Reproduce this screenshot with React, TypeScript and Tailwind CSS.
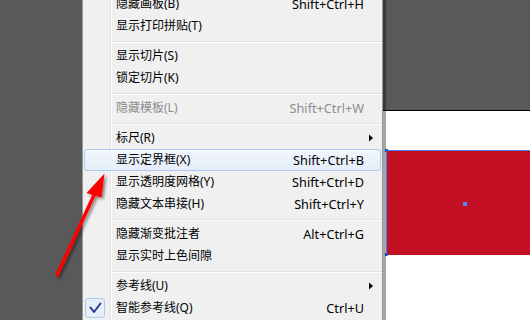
import React from "react";

type Row =
  | { kind: "sep" }
  | {
      kind: "item";
      label: string;
      shortcut?: string;
      sub?: boolean;
      disabled?: boolean;
      hl?: boolean;
      checked?: boolean;
    };

const rows: Row[] = [
  { kind: "item", label: "隐藏画板(B)", shortcut: "Shift+Ctrl+H" },
  { kind: "item", label: "显示打印拼贴(T)" },
  { kind: "sep" },
  { kind: "item", label: "显示切片(S)" },
  { kind: "item", label: "锁定切片(K)" },
  { kind: "sep" },
  { kind: "item", label: "隐藏模板(L)", shortcut: "Shift+Ctrl+W", disabled: true },
  { kind: "sep" },
  { kind: "item", label: "标尺(R)", sub: true },
  { kind: "item", label: "显示定界框(X)", shortcut: "Shift+Ctrl+B", hl: true },
  { kind: "item", label: "显示透明度网格(Y)", shortcut: "Shift+Ctrl+D" },
  { kind: "item", label: "隐藏文本串接(H)", shortcut: "Shift+Ctrl+Y" },
  { kind: "sep" },
  { kind: "item", label: "隐藏渐变批注者", shortcut: "Alt+Ctrl+G" },
  { kind: "item", label: "显示实时上色间隙" },
  { kind: "sep" },
  { kind: "item", label: "参考线(U)", sub: true },
  { kind: "item", label: "智能参考线(Q)", shortcut: "Ctrl+U", checked: true },
];

function MenuRow({ row }: { row: Row }) {
  if (row.kind === "sep") {
    return (
      <div className="h-[8px] pt-[4px] ml-[29px]">
        <div className="h-px bg-[#e0e0e0]" />
        <div className="h-px bg-white" />
      </div>
    );
  }
  return (
    <div
      className={
        "mx-[1px] h-[22px] flex items-center rounded-[3px] border " +
        (row.hl
          ? "border-[#a9cdf2] bg-[linear-gradient(to_bottom,#f2f7fd,#e4edf9)]"
          : "border-transparent")
      }
    >
      <div className="w-[20px] h-[20px] shrink-0">
        {row.checked && (
          <div className="w-[20px] h-[20px] rounded-[3px] border border-[#a9cdf2] bg-[#e6eefa] flex items-center justify-center">
            <svg width="18" height="18" viewBox="0 0 18 18">
              <path d="M4.5 8.5 L8 13 L14.5 4.5" fill="none" stroke="#1d2f8c" strokeWidth="1.8" strokeLinecap="round" strokeLinejoin="round" />
            </svg>
          </div>
        )}
      </div>
      <div className={"ml-[11px] flex-1 whitespace-nowrap " + (row.disabled ? "text-[#8d8d8d]" : "text-black")}>
        {row.label}
      </div>
      {row.shortcut && (
        <div className={"whitespace-nowrap text-[12.7px] " + (row.disabled ? "text-[#8d8d8d]" : "text-black")}>
          {row.shortcut}
        </div>
      )}
      <div className="w-[16px] shrink-0 flex items-center">
        {row.sub && (
          <svg width="9" height="8" viewBox="0 0 9 8" className="ml-[5px]">
            <path d="M0 0.5 L4 4 L0 7.5 Z" fill="#000" />
          </svg>
        )}
      </div>
    </div>
  );
}

export default function App() {
  return (
    <div className="relative flex w-[530px] h-[320px] overflow-hidden bg-[#595959] font-['Noto_Sans','Noto_Sans_CJK_SC',sans-serif] text-[12px] leading-none">
      <div className="w-[82px] shrink-0" />
      <div className="relative z-10 w-[301px] shrink-0 h-full border-x border-[#979797] bg-[linear-gradient(to_right,#f0f0f0_27px,#e2e3e3_27px,#e2e3e3_28px,#ffffff_28px,#ffffff_29px,#f0f0f0_29px)] shadow-[3px_0_0_rgba(0,0,0,0.35)]">
        <div className="mt-[-7px]">
          {rows.map((r, i) => (
            <MenuRow key={i} row={r} />
          ))}
        </div>
      </div>
      <div className="flex-1 flex flex-col">
        <div className="h-[110px] shrink-0" />
        <div className="h-px bg-black shrink-0" />
        <div className="flex-1 bg-white pt-[39px] pl-[3px]">
          <div className="relative h-[105px] bg-[#c30f24] border-t border-l border-[#4a78f0]">
            <div className="absolute left-[-2px] top-[-2px] w-[3px] h-[3px] bg-[#2f5fd8]" />
            <div className="absolute left-[-2px] bottom-[-1px] w-[3px] h-[3px] bg-[#2f5fd8]" />
            <div className="absolute left-[76px] top-[51px] w-[4px] h-[4px] bg-[#4a86ff]" />
          </div>
        </div>
      </div>
      <svg className="absolute left-0 top-0 pointer-events-none z-20" width="530" height="320">
        <defs>
          <filter id="ash" x="-50%" y="-50%" width="200%" height="200%">
            <feDropShadow dx="2" dy="2" stdDeviation="1.5" floodColor="#000" floodOpacity="0.45" />
          </filter>
        </defs>
        <g filter="url(#ash)">
          <line x1="57" y1="275" x2="95" y2="193" stroke="#ff0000" strokeWidth="3.5" strokeLinecap="round" />
          <polygon points="104.5,173.5 86.5,193 101.5,197.5" fill="#ff0000" />
        </g>
      </svg>
    </div>
  );
}
